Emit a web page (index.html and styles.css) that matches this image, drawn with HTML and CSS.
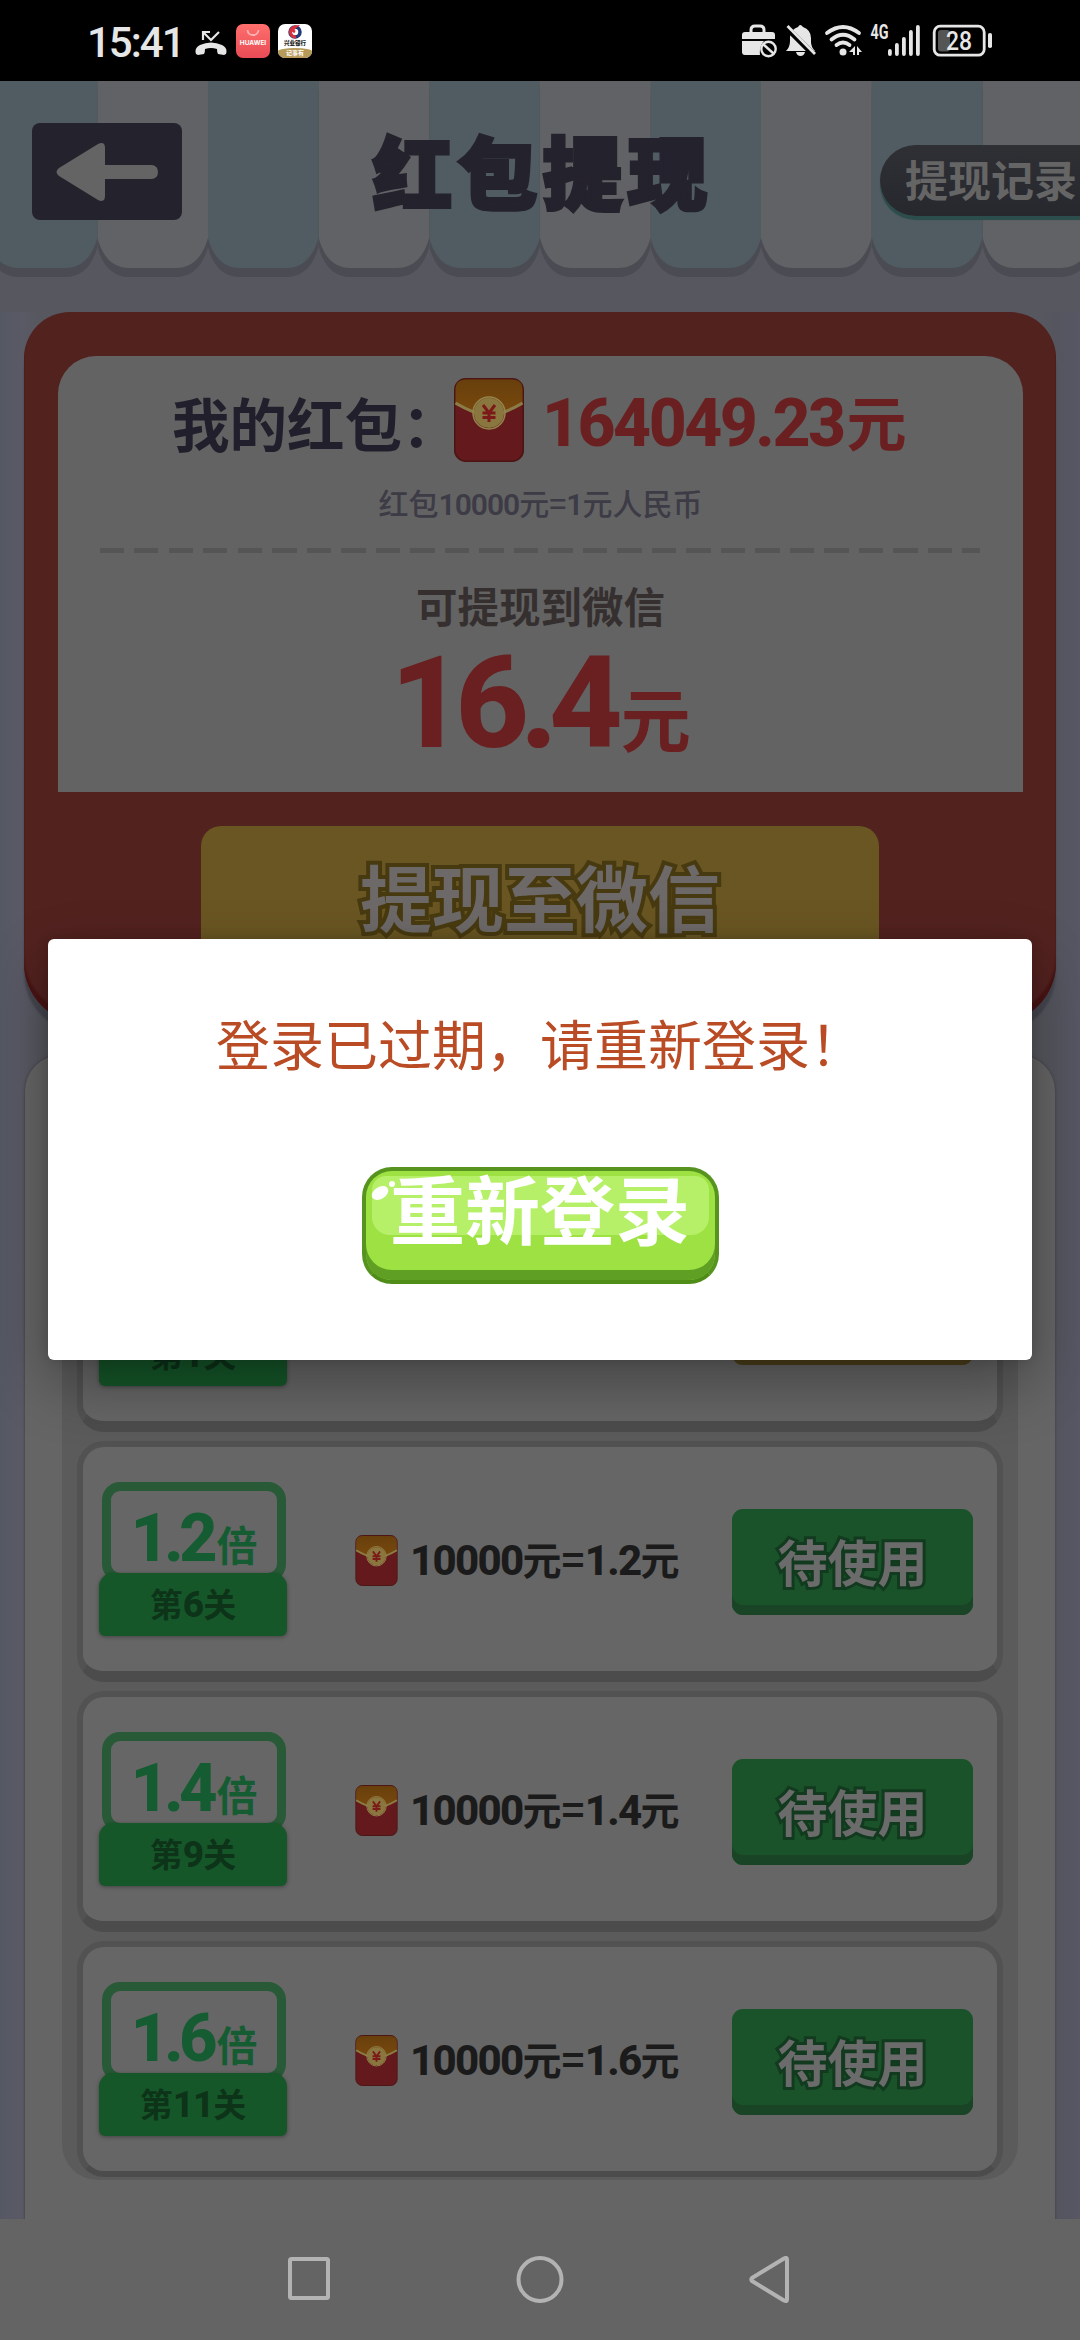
FILE: index.html
```html
<!DOCTYPE html>
<html lang="zh-CN">
<head>
<meta charset="utf-8">
<title>红包提现</title>
<link rel="stylesheet" href="styles.css">
</head>
<body>
<svg class="defs" width="0" height="0">
  <defs>
    <linearGradient id="flap" x1="0" y1="0" x2="0" y2="1"><stop offset="0" stop-color="#683f0c"/><stop offset="1" stop-color="#7c4b0d"/></linearGradient>
    <symbol id="envelope" viewBox="0 0 70 84">
      <rect x="0.8" y="0.8" width="68.4" height="82.4" rx="11" fill="#641a1c" stroke="#4a1513" stroke-width="1.6"/>
      <path d="M1.5 27V12Q1.5 1.5 12 1.5H58Q68.500 1.500 68.500 12V27L35 43Z" fill="url(#flap)"/>
      <path d="M1.500 25Q20 36 35 38Q50 36 68.500 25" fill="none" stroke="#8b7d48" stroke-width="3"/>
      <circle cx="35" cy="35" r="15" fill="#8a773f"/>
      <circle cx="35" cy="35" r="16" fill="none" stroke="#94854e" stroke-width="1.500"/>
      <path d="M29 27L35 35L41 27M35 35V44M28.500 35H41.500M28.500 39.500H41.500" fill="none" stroke="#7b1a18" stroke-width="3"/>
    </symbol>
    <symbol id="scallop" viewBox="0 0 111 196">
      <path d="M0 0H110.500V157Q102 187 78 187H32Q8 187 0 157Z"/>
    </symbol>
  </defs>
</svg>
<div class="screen">
  <header class="status">
    <div class="status-left">
      <span class="time">15:41</span>
      <svg width="32" height="27" viewBox="0 0 32 27"><path d="M1 25Q-1 19 5 16Q16 11 27 16Q33 19 31 25L29 26L23 25Q22 24 22 20Q16 18 10 20Q10 24 9 25L3 26Z" fill="#e6e6e6"/><path d="M8 11V3H15M8 3L16 11L24 3" fill="none" stroke="#e6e6e6" stroke-width="2.200"/></svg>
      <span class="app-icon app-huawei"><svg width="34" height="12" viewBox="0 0 34 12"><path d="M11.500 6Q12 11 17 11Q22 11 22.500 6" fill="none" stroke="#ffb0b0" stroke-width="1.800"/></svg><b>HUAWEI</b></span>
      <span class="app-icon app-bank"><svg width="16" height="14" viewBox="0 0 16 14"><circle cx="8" cy="7" r="5" fill="none" stroke="#233a78" stroke-width="3.500"/><path d="M9 12A5 5 0 1 1 8 2Q4 5 8 7" fill="none" stroke="#d8303c" stroke-width="3"/></svg><b>兴业银行</b><i>记事有</i></span>
    </div>
    <div class="status-right">
      <svg class="indicators" width="250" height="34" viewBox="0 0 250 34" fill="#e6e6e6">
        <path d="M9 9V6Q9 2 13 2H18Q22 2 22 6V9" fill="none" stroke="#e6e6e6" stroke-width="3"/>
        <path d="M3 8H30Q33 8 33 11V15H0V11Q0 8 3 8ZM0 17H22Q17 22 18 31H3Q0 31 0 28Z"/>
        <circle cx="26.500" cy="25" r="7.200" fill="#000" stroke="#e6e6e6" stroke-width="2.400"/><path d="M21 20L32 30" stroke="#e6e6e6" stroke-width="2.400"/>
        <path d="M44 27Q48 23 48 17V13Q49 5 56 3Q58-1 61 3Q69 6 69 14V18Q69 23 73 27ZM54 28H63Q62 32 58.500 32Q55 32 54 28Z"/>
        <path d="M44 3L72 31" stroke="#000" stroke-width="6"/><path d="M45.500 2L73 30" stroke="#e6e6e6" stroke-width="2.800"/>
        <g fill="none" stroke="#e6e6e6" stroke-width="3.800" stroke-linecap="round"><path d="M85 9Q101-3 117 9"/><path d="M89.500 15.500Q101 6 112.500 15.500"/><path d="M94.500 21Q101 16 107.500 21"/></g><circle cx="101" cy="28" r="3.500"/>
        <path d="M107 28L113 22V31H111V28ZM115 22L120 28H117V31H115Z"/>
        <path d="M146 27a1.900 1.900 0 0 1 3.800 0v3a1.900 1.900 0 0 1-3.800 0zM153 21a1.900 1.900 0 0 1 3.800 0v9a1.900 1.900 0 0 1-3.800 0zM160 15a1.900 1.900 0 0 1 3.800 0v15a1.900 1.900 0 0 1-3.800 0zM167 8a1.900 1.900 0 0 1 3.800 0v22a1.900 1.900 0 0 1-3.800 0zM174 3a1.900 1.900 0 0 1 3.800 0v27a1.900 1.900 0 0 1-3.800 0z"/>
        <rect x="192.200" y="2.200" width="50" height="29" rx="6" fill="none" stroke="#e6e6e6" stroke-width="2.800"/>
        <rect x="196" y="6" width="12" height="21.500" rx="3" fill="#555"/>
        <rect x="246" y="9" width="4" height="15" rx="1.800"/>
        <text class="net" x="128.500" y="15" textLength="18" lengthAdjust="spacingAndGlyphs">4G</text>
        <text class="charge" x="204" y="26" textLength="26" lengthAdjust="spacingAndGlyphs">28</text>
      </svg>
    </div>
  </header>

  <main class="app">
    <div class="topbar">
      <svg class="awning" width="1080" height="196" viewBox="0 0 1080 196">
        <g fill="#4b4b53"><use href="#scallop" x="-13" y="9" width="111" height="196"/><use href="#scallop" x="97.500" y="9" width="111" height="196"/><use href="#scallop" x="208" y="9" width="111" height="196"/><use href="#scallop" x="318.700" y="9" width="111" height="196"/><use href="#scallop" x="429.300" y="9" width="111" height="196"/><use href="#scallop" x="540" y="9" width="111" height="196"/><use href="#scallop" x="650.500" y="9" width="111" height="196"/><use href="#scallop" x="761" y="9" width="111" height="196"/><use href="#scallop" x="872" y="9" width="111" height="196"/><use href="#scallop" x="982.700" y="9" width="111" height="196"/></g>
        <g fill="#505c62"><use href="#scallop" x="-13" width="111" height="196"/><use href="#scallop" x="208" width="111" height="196"/><use href="#scallop" x="429.300" width="111" height="196"/><use href="#scallop" x="650.500" width="111" height="196"/><use href="#scallop" x="872" width="111" height="196"/></g>
        <g fill="#616265"><use href="#scallop" x="97.500" width="111" height="196"/><use href="#scallop" x="318.700" width="111" height="196"/><use href="#scallop" x="540" width="111" height="196"/><use href="#scallop" x="761" width="111" height="196"/><use href="#scallop" x="982.700" width="111" height="196"/></g>
      </svg>
      <a class="back"><svg width="102" height="60" viewBox="0 0 102 60"><path d="M3 26L42 2Q49-1 49 6V23H96Q102 24 102 30Q102 36 96 37H49V54Q49 61 42 58L3 34Q-2 30 3 26Z" fill="#646464"/></svg></a>
      <h1 class="title">红包提现</h1>
      <a class="records">提现记录</a>
    </div>

    <section class="wallet">
      <div class="balance">
        <div class="mine">
          <span class="mine-label">我的红包：</span>
          <svg class="mine-icon" width="70" height="84"><use href="#envelope"/></svg>
          <span class="mine-sum"><span class="num">164049.23</span>元</span>
        </div>
        <p class="rate">红包<span class="num">10000</span>元=<span class="num">1</span>元人民币</p>
        <div class="dashes"></div>
        <p class="target">可提现到微信</p>
        <p class="cash"><span class="num">16.4</span>元</p>
      </div>
      <a class="withdraw">提现至微信</a>
    </section>

    <section class="offers">
      <div class="list">
        <article class="row">
          <div class="badge"><div class="times"><span class="num">1</span>倍</div><div class="level">第<span class="num">1</span>关</div></div>
          <div class="swap"><svg width="43" height="51" viewBox="0 0 70 84"><use href="#envelope"/></svg><span><span class="num">10000</span>元=<span class="num">1</span>元</span></div>
          <a class="use use-now">使用</a>
        </article>
        <article class="row">
          <div class="badge"><div class="times"><span class="num">1.2</span>倍</div><div class="level">第<span class="num">6</span>关</div></div>
          <div class="swap"><svg width="43" height="51" viewBox="0 0 70 84"><use href="#envelope"/></svg><span><span class="num">10000</span>元=<span class="num">1.2</span>元</span></div>
          <a class="use">待使用</a>
        </article>
        <article class="row">
          <div class="badge"><div class="times"><span class="num">1.4</span>倍</div><div class="level">第<span class="num">9</span>关</div></div>
          <div class="swap"><svg width="43" height="51" viewBox="0 0 70 84"><use href="#envelope"/></svg><span><span class="num">10000</span>元=<span class="num">1.4</span>元</span></div>
          <a class="use">待使用</a>
        </article>
        <article class="row row-last">
          <div class="badge"><div class="times"><span class="num">1.6</span>倍</div><div class="level">第<span class="num">11</span>关</div></div>
          <div class="swap"><svg width="43" height="51" viewBox="0 0 70 84"><use href="#envelope"/></svg><span><span class="num">10000</span>元=<span class="num">1.6</span>元</span></div>
          <a class="use">待使用</a>
        </article>
      </div>
    </section>
  </main>

  <nav class="nav">
    <svg width="502" height="48" viewBox="0 0 502 48" fill="none" stroke="#b3b3b3" stroke-width="4" stroke-linejoin="round"><rect x="2" y="3" width="38" height="39" rx="1.500"/><circle cx="252" cy="23.500" r="21.500"/><path d="M499 3.500V43.500Q499 46 496 44.500L464 25Q462.500 23.500 464 22L496 2.500Q499 1 499 3.500Z"/></svg>
  </nav>

  <div class="dialog">
    <p class="message">登录已过期，请重新登录！</p>
    <a class="relogin"><svg class="shine" width="40" height="24" viewBox="0 0 40 24"><ellipse cx="10" cy="15" rx="9" ry="6" transform="rotate(-32 10 15)" fill="#fff"/><circle cx="22" cy="6" r="3" fill="#fff"/></svg><span>重新登录</span></a>
  </div>
</div>
</body>
</html>
```

FILE: styles.css
```css
* { box-sizing: border-box; }
body, p, h1 { margin: 0; }
body {
  width: 1080px;
  font-family: "Noto Sans CJK SC", sans-serif;
  font-weight: 700;
}
.defs { display: block; }
.screen {
  position: relative;
  display: flex;
  flex-direction: column;
  width: 1080px;
  height: 2340px;
  overflow: hidden;
  background: #57575f;
}
.num { font-family: Roboto, "Noto Sans CJK SC", sans-serif; font-weight: 800; }

/* status bar */
.status {
  display: flex;
  justify-content: space-between;
  height: 81px;
  padding: 24px 88px 0 87px;
  background: #000;
}
.status-left { display: flex; height: 34px; align-items: flex-start; }
.status-left > svg { margin: 5px 9px 0 0; }
.time {
  width: 108px;
  font: 500 42px/38px Roboto, sans-serif;
  letter-spacing: -2px;
  color: #e6e6e6;
}
.app-icon {
  display: flex;
  flex-direction: column;
  align-items: center;
  width: 34px;
  height: 34px;
  margin-right: 8px;
  border-radius: 7px;
  overflow: hidden;
  white-space: nowrap;
}
.app-huawei { background: linear-gradient(#ff6f6c, #e84b56); }
.app-huawei b { font: 700 6.500px/14px Inter, sans-serif; color: #fff; }
.app-bank { background: #fff; }
.app-bank svg { margin-top: 1px; }
.app-bank b { font-size: 5.500px; line-height: 9px; color: #222; }
.app-bank i {
  width: 34px;
  border-radius: 50% 50% 0 0 / 30% 30% 0 0;
  font-size: 6px;
  line-height: 10px;
  font-style: normal;
  text-align: center;
  color: #fff;
  background: #b69a58;
}
.indicators { overflow: visible; }
.net { font: 700 20px Roboto, sans-serif; }
.charge { font: 500 25px Roboto, sans-serif; }

/* page */
.app {
  height: 2138px;
  overflow: hidden;
  background: linear-gradient(90deg, #555863, #5a5a66 24px, #57575f 40px, #57575f 1040px, #55555f 1056px, #575765);
}
.topbar {
  position: relative;
  display: flex;
  height: 231px;
  padding: 42px 0 0 32px;
  background: #57575f;
}
.awning { position: absolute; left: 0; top: 0; }
.back {
  position: relative;
  display: flex;
  flex: none;
  align-items: center;
  justify-content: center;
  width: 150px;
  height: 97px;
  border-radius: 8px;
  background: #24222d;
}
.title {
  position: relative;
  flex: none;
  width: 350px;
  margin: 3px 0 0 191px;
  font-size: 79px;
  line-height: 88px;
  font-weight: 900;
  letter-spacing: 6px;
  white-space: nowrap;
  color: #24222d;
  -webkit-text-stroke: 4px #24222d;
}
.records {
  position: relative;
  flex: none;
  width: 240px;
  height: 71px;
  margin: 22px 0 0 157px;
  padding-left: 25px;
  border-radius: 36px;
  box-shadow: 0 4px 1px #2b4d4c;
  font-size: 43px;
  line-height: 66px;
  color: #656565;
  background: linear-gradient(#2f3034, #26282e);
}

.wallet {
  height: 711px;
  margin: 0 24px;
  padding: 44px 33px 0 34px;
  border-radius: 46px 46px 60px 60px;
  box-shadow: inset 0 -8px 2px #4a1414, 0 10px 2px #45464f;
  background: #52221f;
}
.balance {
  height: 436px;
  padding-top: 22px;
  border-radius: 38px 38px 0 0;
  text-align: center;
  background: #636363;
}
.mine { display: flex; height: 84px; padding-left: 114px; }
.mine-label {
  width: 282px;
  font-size: 57.500px;
  line-height: 88px;
  text-align: left;
  white-space: nowrap;
  color: #211f2b;
}
.mine-icon { flex: none; }
.mine-sum {
  display: flex;
  align-items: baseline;
  margin-left: 18px;
  font-size: 60px;
  line-height: 84px;
  color: #6a2021;
}
.mine-sum .num { margin-right: 3px; font-size: 66px; letter-spacing: -2.500px; }
.rate { margin-top: 18px; font-size: 30px; line-height: 44px; font-weight: 500; color: #3c3b46; }
.rate .num { font-size: 30px; font-weight: 600; letter-spacing: -1px; }
.dashes {
  width: 880px;
  height: 5px;
  margin: 21px auto 0 42px;
  background: repeating-linear-gradient(90deg, #555 0 24px, transparent 24px 34.500px);
}
.target { margin-top: 25px; font-size: 41.500px; line-height: 54px; font-weight: 700; color: #35302f; }
.cash {
  display: flex;
  justify-content: center;
  align-items: baseline;
  height: 130px;
  margin-top: 6px;
  font-size: 70px;
  line-height: 130px;
  color: #6a2021;
}
.cash .num { margin-right: 7px; font-size: 128px; letter-spacing: -9px; }
.withdraw {
  display: block;
  width: 678px;
  height: 140px;
  margin: 34px auto 0 143px;
  border-radius: 20px;
  font-size: 72px;
  line-height: 137px;
  text-align: center;
  color: #6d6969;
  -webkit-text-stroke: 8px #483a10;
  paint-order: stroke fill;
  background: #695622;
}

.offers {
  height: 1180px;
  margin: 32px 25px 0;
  padding: 121px 37px 0;
  border-radius: 36px 36px 0 0;
  box-shadow: 0 0 2px 1px #4a4a50;
  background: #656565;
}
.list {
  height: 1004px;
  padding: 15px 15px 0;
  border-radius: 36px;
  overflow: hidden;
  background: #5b5b5b;
}
.row {
  display: flex;
  align-items: flex-start;
  height: 241px;
  margin-bottom: 9px;
  padding: 35px 24px 0 16px;
  border: 6px solid #525252;
  border-bottom: 11px solid #4c4c4c;
  border-radius: 27px;
  background: #666;
}
.row-last { height: 236px; border-bottom-width: 6px; }
.badge { width: 188px; }
.times {
  width: 184px;
  height: 100px;
  margin-left: 3px;
  border: 9px solid #285a37;
  border-radius: 18px;
  font-size: 41px;
  line-height: 95px;
  text-align: center;
  color: #155c32;
}
.times .num { margin-right: 4px; font-size: 67px; letter-spacing: -5px; }
.level {
  position: relative;
  height: 63px;
  margin-top: -9px;
  border-radius: 14px 14px 6px 6px;
  box-shadow: 0 1px 4px rgba(0, 0, 0, .35);
  font-size: 33px;
  line-height: 61px;
  text-align: center;
  color: #0d3319;
  background: #155729;
}
.level .num { font-size: 37px; letter-spacing: -1px; }
.swap {
  display: flex;
  align-items: center;
  width: 377px;
  height: 51px;
  margin: 53px 0 0 68px;
  font-size: 39px;
  line-height: 47px;
  white-space: nowrap;
  color: #1b1b1b;
}
.swap > span { height: 51px; margin-left: 12px; }
.swap .num { font-size: 42px; letter-spacing: -1.700px; }
.use {
  width: 241px;
  height: 106px;
  margin-top: 27px;
  border-radius: 11px;
  box-shadow: inset 0 -10px 0 #1a4426;
  font-size: 50px;
  line-height: 102px;
  text-align: center;
  color: #6b6b6b;
  -webkit-text-stroke: 6px #123a1f;
  paint-order: stroke fill;
  background: #1a5229;
}
.use-now { box-shadow: inset 0 -10px 0 #4f421c; -webkit-text-stroke-color: #483a10; background: #695622; }

.nav { height: 121px; padding: 37px 0 0 288px; background: #646464; }

.dialog {
  position: absolute;
  left: 48px;
  top: 939px;
  display: flex;
  flex-direction: column;
  align-items: center;
  width: 984px;
  height: 421px;
  padding-top: 64px;
  border-radius: 6px;
  box-shadow: 0 24px 60px rgba(0, 0, 0, .33), 0 0 12px rgba(0, 0, 0, .15);
  background: #fff;
}
.message { font-size: 54px; line-height: 80px; height: 78px; font-weight: 400; color: #b94b25; white-space: nowrap; }
.relogin {
  position: relative;
  width: 357px;
  height: 117px;
  margin-top: 86px;
  padding: 5px 6px;
  border: 4px solid #57931f;
  border-bottom-color: #4f8c18;
  border-radius: 30px;
  box-shadow: inset 0 -10px 0 #5fa024;
  background: #9de242;
  font-size: 75px;
  line-height: 61px;
  text-align: center;
  color: #fff;
}
.relogin span { display: block; height: 59px; border-radius: 14px 14px 18px 18px; background: #b6f068; white-space: nowrap; }
.shine { position: absolute; left: 4px; top: 7px; }
```
